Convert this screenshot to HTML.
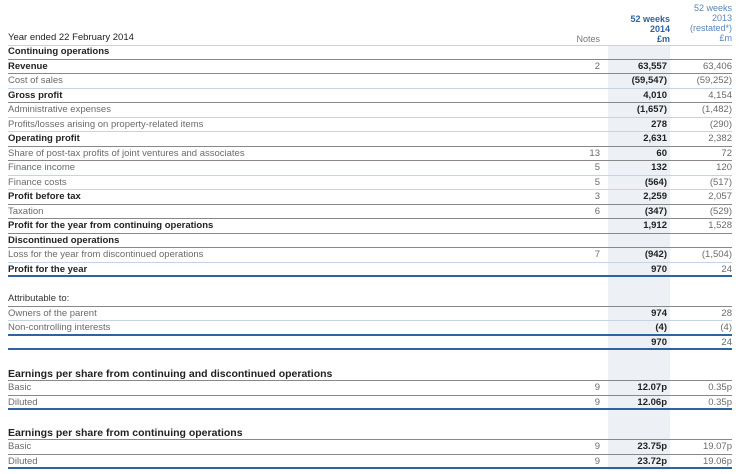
<!DOCTYPE html>
<html><head><meta charset="utf-8"><style>
body{margin:0;width:740px;height:474px;background:#fff;font-family:"Liberation Sans",sans-serif;position:relative;overflow:hidden}
.sh{position:absolute;left:608px;width:62px;top:45px;height:425px;background:#edf1f6}
.r{position:absolute;left:8px;width:724px;height:14.5px;font-size:9.5px;line-height:14.5px;color:#6a6a6a;box-sizing:border-box;border-bottom:1px solid #c6d3e2}
.r.b{color:#222;font-weight:bold}
.r.g{border-bottom-color:#888}
.r.bl{border-bottom:2px solid #2d64a0}
.r span{position:absolute;text-align:right;font-weight:normal;color:#6a6a6a}
.n{right:132px}.r span.a{right:65px;color:#222;font-weight:bold}.c{right:0}
.h{position:absolute;font-size:9px;line-height:10px;text-align:right;color:#2d64a0}
.big{font-size:10.5px}
</style></head><body>
<div class="sh"></div>
<div class="h" style="right:70px;top:14px;font-weight:bold">52 weeks<br>2014<br>£m</div>
<div class="h" style="right:8px;top:3px;color:#5a85b8">52 weeks<br>2013<br>(restated*)<br>£m</div>
<div class="h" style="right:140px;top:34px;color:#777">Notes</div>
<div class="r" style="top:31px;color:#222">Year ended 22 February 2014</div>
<div class="r b g" style="top:45px">Continuing operations</div>
<div class="r b g" style="top:59.5px">Revenue<span class="n">2</span><span class="a">63,557</span><span class="c">63,406</span></div>
<div class="r" style="top:74px">Cost of sales<span class="a">(59,547)</span><span class="c">(59,252)</span></div>
<div class="r b g" style="top:88.5px">Gross profit<span class="a">4,010</span><span class="c">4,154</span></div>
<div class="r" style="top:103px">Administrative expenses<span class="a">(1,657)</span><span class="c">(1,482)</span></div>
<div class="r" style="top:117.5px">Profits/losses arising on property-related items<span class="a">278</span><span class="c">(290)</span></div>
<div class="r b g" style="top:132px">Operating profit<span class="a">2,631</span><span class="c">2,382</span></div>
<div class="r g" style="top:146.5px">Share of post-tax profits of joint ventures and associates<span class="n">13</span><span class="a">60</span><span class="c">72</span></div>
<div class="r" style="top:161px">Finance income<span class="n">5</span><span class="a">132</span><span class="c">120</span></div>
<div class="r" style="top:175.5px">Finance costs<span class="n">5</span><span class="a">(564)</span><span class="c">(517)</span></div>
<div class="r b g" style="top:190px">Profit before tax<span class="n">3</span><span class="a">2,259</span><span class="c">2,057</span></div>
<div class="r g" style="top:204.5px">Taxation<span class="n">6</span><span class="a">(347)</span><span class="c">(529)</span></div>
<div class="r b g" style="top:219px">Profit for the year from continuing operations<span class="a">1,912</span><span class="c">1,528</span></div>
<div class="r b g" style="top:233.5px">Discontinued operations</div>
<div class="r" style="top:248px">Loss for the year from discontinued operations<span class="n">7</span><span class="a">(942)</span><span class="c">(1,504)</span></div>
<div class="r b bl" style="top:262.5px">Profit for the year<span class="a">970</span><span class="c">24</span></div>

<div class="r g" style="top:292px;color:#333">Attributable to:</div>
<div class="r" style="top:306.5px">Owners of the parent<span class="a">974</span><span class="c">28</span></div>
<div class="r bl" style="top:321px">Non-controlling interests<span class="a">(4)</span><span class="c">(4)</span></div>
<div class="r bl" style="top:335.5px"><span class="a">970</span><span class="c">24</span></div>

<div class="r b g big" style="top:366.5px">Earnings per share from continuing and discontinued operations</div>
<div class="r g" style="top:381px">Basic<span class="n">9</span><span class="a">12.07p</span><span class="c">0.35p</span></div>
<div class="r bl" style="top:395.5px">Diluted<span class="n">9</span><span class="a">12.06p</span><span class="c">0.35p</span></div>

<div class="r b g big" style="top:425.5px">Earnings per share from continuing operations</div>
<div class="r g" style="top:440px">Basic<span class="n">9</span><span class="a">23.75p</span><span class="c">19.07p</span></div>
<div class="r bl" style="top:454.5px">Diluted<span class="n">9</span><span class="a">23.72p</span><span class="c">19.06p</span></div>
</body></html>
